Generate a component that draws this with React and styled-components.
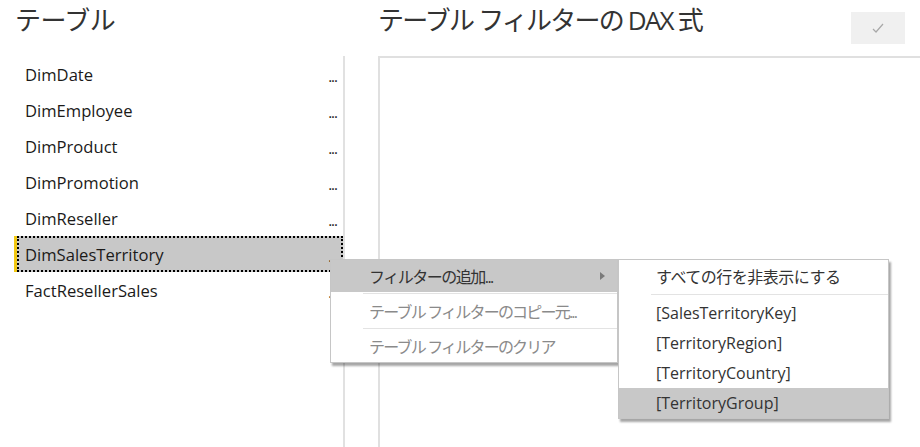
import React from "react";
import styled, { createGlobalStyle } from "styled-components";

const GlobalStyle = createGlobalStyle`
  html, body {
    margin: 0;
    padding: 0;
    background: #ffffff;
  }
  body {
    font-family: "Open Sans", "Noto Sans CJK JP", sans-serif;
    color: #252423;
  }
`;

const Page = styled.div`
  position: relative;
  display: flex;
  width: 920px;
  height: 447px;
  overflow: hidden;
`;

const LeftColumn = styled.div`
  width: 345px;
  display: flex;
  flex-direction: column;
`;

const RightColumn = styled.div`
  flex: 1;
  margin-left: 33px;
  display: flex;
  flex-direction: column;
`;

const Header = styled.div`
  height: 56px;
  display: flex;
  justify-content: space-between;
  align-items: flex-start;
  padding-left: ${(p) => p.indent || 0}px;
`;

const Title = styled.h1`
  margin: 0;
  padding-top: 7px;
  font-family: "Open Sans", "Noto Sans CJK JP", sans-serif;
  font-size: 26px;
  line-height: 26px;
  font-weight: 400;
  letter-spacing: ${(p) => p.tight || -1.4}px;
  color: #333333;
`;

const ApplyButton = styled.button`
  margin: 12px 15px 0 0;
  width: 54px;
  height: 32px;
  border: none;
  background: #f0f0f0;
  display: flex;
  align-items: center;
  justify-content: center;
  padding: 0;
`;

const TableList = styled.ul`
  list-style: none;
  margin: 0;
  padding: 0 0 0 14px;
  flex: 1;
  border-right: 2px solid #e1e1e1;
`;

const Row = styled.li`
  height: 36px;
  border-left: 3px solid ${(p) => (p.selected ? "#f2c811" : "transparent")};
`;

const RowBody = styled.div`
  height: 100%;
  box-sizing: border-box;
  display: flex;
  align-items: center;
  justify-content: space-between;
  padding: 0 4px 0 6px;
  border: 2px dotted ${(p) => (p.selected ? "#000000" : "transparent")};
  background: ${(p) => (p.selected ? "#c8c8c8" : "transparent")};
  font-size: 16.6px;
  color: #1b1a19;
`;

const More = styled.span`
  font-size: 15px;
  letter-spacing: -1px;
  align-self: center;
  padding-top: 4px;
`;

const Editor = styled.div`
  flex: 1;
  border-top: 2px solid #e0e0e0;
  border-left: 2px solid #e0e0e0;
`;

const MenuLayer = styled.div`
  position: absolute;
  left: 330px;
  top: 259px;
  display: flex;
  align-items: flex-start;
`;

const Menu = styled.div`
  width: ${(p) => p.width}px;
  box-sizing: border-box;
  background: #ffffff;
  border: 1px solid #c6c6c6;
  box-shadow: 2px 3px 2px rgba(0, 0, 0, 0.35);
  display: flex;
  flex-direction: column;
`;

const MenuItem = styled.div`
  height: ${(p) => p.height || 32}px;
  display: flex;
  align-items: center;
  justify-content: space-between;
  padding: 0 12px 0 ${(p) => p.indent}px;
  background: ${(p) => (p.active ? "#c8c8c8" : "transparent")};
  color: ${(p) => (p.disabled ? "#8a8a8a" : "#333333")};
  font-size: 16px;
  letter-spacing: ${(p) => p.tight || 0}px;
  white-space: nowrap;
`;

const Separator = styled.div`
  height: 1px;
  background: #e3e3e3;
  margin: ${(p) => p.gap || "1px 0 1px"};
  margin-left: ${(p) => p.indent}px;
`;

const Arrow = styled.span`
  width: 0;
  height: 0;
  border-top: 4px solid transparent;
  border-bottom: 4px solid transparent;
  border-left: 5px solid #7a7a7a;
`;

const tables = [
  "DimDate",
  "DimEmployee",
  "DimProduct",
  "DimPromotion",
  "DimReseller",
  "DimSalesTerritory",
  "FactResellerSales",
];

const columns = [
  "[SalesTerritoryKey]",
  "[TerritoryRegion]",
  "[TerritoryCountry]",
  "[TerritoryGroup]",
];

const CheckIcon = () => (
  <svg width="12" height="10" viewBox="0 0 12 10">
    <path d="M1 6 L4 9 L11 1" fill="none" stroke="#a8a8a8" strokeWidth="1.2" />
  </svg>
);

export default function App() {
  return (
    <Page>
      <GlobalStyle />
      <LeftColumn>
        <Header indent={15}>
          <Title tight={-0.6}>テーブル</Title>
        </Header>
        <TableList>
          {tables.map((t) => (
            <Row key={t} selected={t === "DimSalesTerritory"}>
              <RowBody selected={t === "DimSalesTerritory"}>
                <span>{t}</span>
                <More>...</More>
              </RowBody>
            </Row>
          ))}
        </TableList>
      </LeftColumn>
      <RightColumn>
        <Header>
          <Title tight={-1.8}>テーブル フィルターの DAX 式</Title>
          <ApplyButton>
            <CheckIcon />
          </ApplyButton>
        </Header>
        <Editor />
      </RightColumn>

      <MenuLayer>
        <Menu width={288}>
          <MenuItem indent={38} active tight={-1.5}>
            フィルターの追加...
            <Arrow />
          </MenuItem>
          <Separator indent={32} />
          <MenuItem indent={38} disabled tight={-1.8}>
            テーブル フィルターのコピー元...
          </MenuItem>
          <Separator indent={32} />
          <MenuItem indent={38} disabled tight={-1.8}>
            テーブル フィルターのクリア
          </MenuItem>
        </Menu>
        <Menu width={271}>
          <MenuItem indent={37} tight={-0.5}>
            すべての行を非表示にする
          </MenuItem>
          <Separator indent={32} gap="2px 0 3px" />
          {columns.map((c) => (
            <MenuItem key={c} indent={37} height={30} active={c === "[TerritoryGroup]"}>
              {c}
            </MenuItem>
          ))}
        </Menu>
      </MenuLayer>
    </Page>
  );
}
